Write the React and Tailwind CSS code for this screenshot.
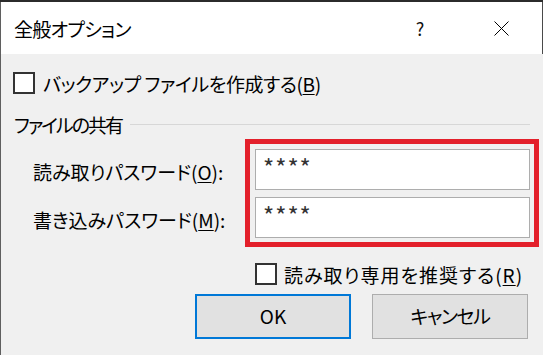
export default function App() {
  return (
    <div className="w-[543px] h-[355px] bg-[#2b2b2b] overflow-hidden font-['Noto_Sans_CJK_JP',sans-serif] [font-feature-settings:'palt'] text-black">
      <div className="flex flex-col h-[353px] mt-[2px] border-l border-[#5f5f5f]">
        {/* title bar */}
        <div className="h-[52px] shrink-0 bg-white flex items-center border-r border-[#4a4a4a]">
          <span className="ml-[13px] text-[19px] leading-none tracking-[-0.7px]">全般オプション</span>
          <span className="ml-auto w-[20px] text-center text-[18px] leading-none text-[#111]">?</span>
          <span className="ml-[64px] mr-[33px] w-[15px] h-[15px] flex">
            <svg width="15" height="15" viewBox="0 0 15 15">
              <path d="M0.5 0.5 L14.5 14.5 M14.5 0.5 L0.5 14.5" stroke="#000" strokeWidth="1" fill="none" />
            </svg>
          </span>
        </div>
        {/* body */}
        <div className="flex-1 bg-[#f0f0f0] pl-[12px] pt-[18px] flex flex-col">
          <div className="flex items-center h-[22px]">
            <div className="w-[22px] h-[22px] border-2 border-[#333] bg-white shrink-0" />
            <span className="ml-[8px] text-[19px] leading-none whitespace-nowrap tracking-[-0.4px]">
              バックアップ ファイルを作成する(<u className="underline-offset-2">B</u>)
            </span>
          </div>
          <div className="mt-[20px] flex items-center h-[20px]">
            <span className="ml-[1px] text-[19px] leading-none whitespace-nowrap tracking-[-2px]">ファイルの共有</span>
            <div className="flex-1 h-px bg-[#d7d7d7] ml-[8px] mr-[13px]" />
          </div>
          <div className="mt-[5px] flex">
            <div className="w-[232px] pl-[20px] pt-[13px] flex flex-col gap-[7px]">
              <div className="h-[41px] flex items-center text-[19px] whitespace-nowrap">
                読み取りパスワード(<u className="underline-offset-2">O</u>):
              </div>
              <div className="h-[41px] flex items-center text-[19px] whitespace-nowrap">
                書き込みパスワード(<u className="underline-offset-2">M</u>):
              </div>
            </div>
            <div className="w-[294px] h-[108px] border-[5px] border-[#e3202b] pt-[5px] pl-[5px] pr-[4px] pb-[4px] flex flex-col gap-[7px]">
              <div className="h-[41px] bg-white border border-[#adadad] pl-[7px] pt-[3px] text-[24px] leading-[28px] tracking-[1px] text-[#333]">
                ****
              </div>
              <div className="h-[41px] bg-white border border-[#adadad] pl-[7px] pt-[3px] text-[24px] leading-[28px] tracking-[1px] text-[#333]">
                ****
              </div>
            </div>
          </div>
          <div className="mt-[16px] ml-[242px] flex items-center h-[22px]">
            <div className="w-[22px] h-[22px] border-2 border-[#333] bg-white shrink-0" />
            <span className="ml-[7px] text-[19px] leading-none whitespace-nowrap tracking-[1px]">
              読み取り専用を推奨する(<u className="underline-offset-2">R</u>)
            </span>
          </div>
          <div className="mt-[9px] ml-[182px] flex gap-[21px]">
            <button className="w-[156px] h-[45px] bg-[#e1e1e1] border-2 border-[#0078d7] text-[19px] text-black">
              OK
            </button>
            <button className="w-[156px] h-[45px] bg-[#e1e1e1] border border-[#adadad] text-[19px] text-black tracking-[-1.4px]">
              キャンセル
            </button>
          </div>
        </div>
      </div>
    </div>
  );
}
